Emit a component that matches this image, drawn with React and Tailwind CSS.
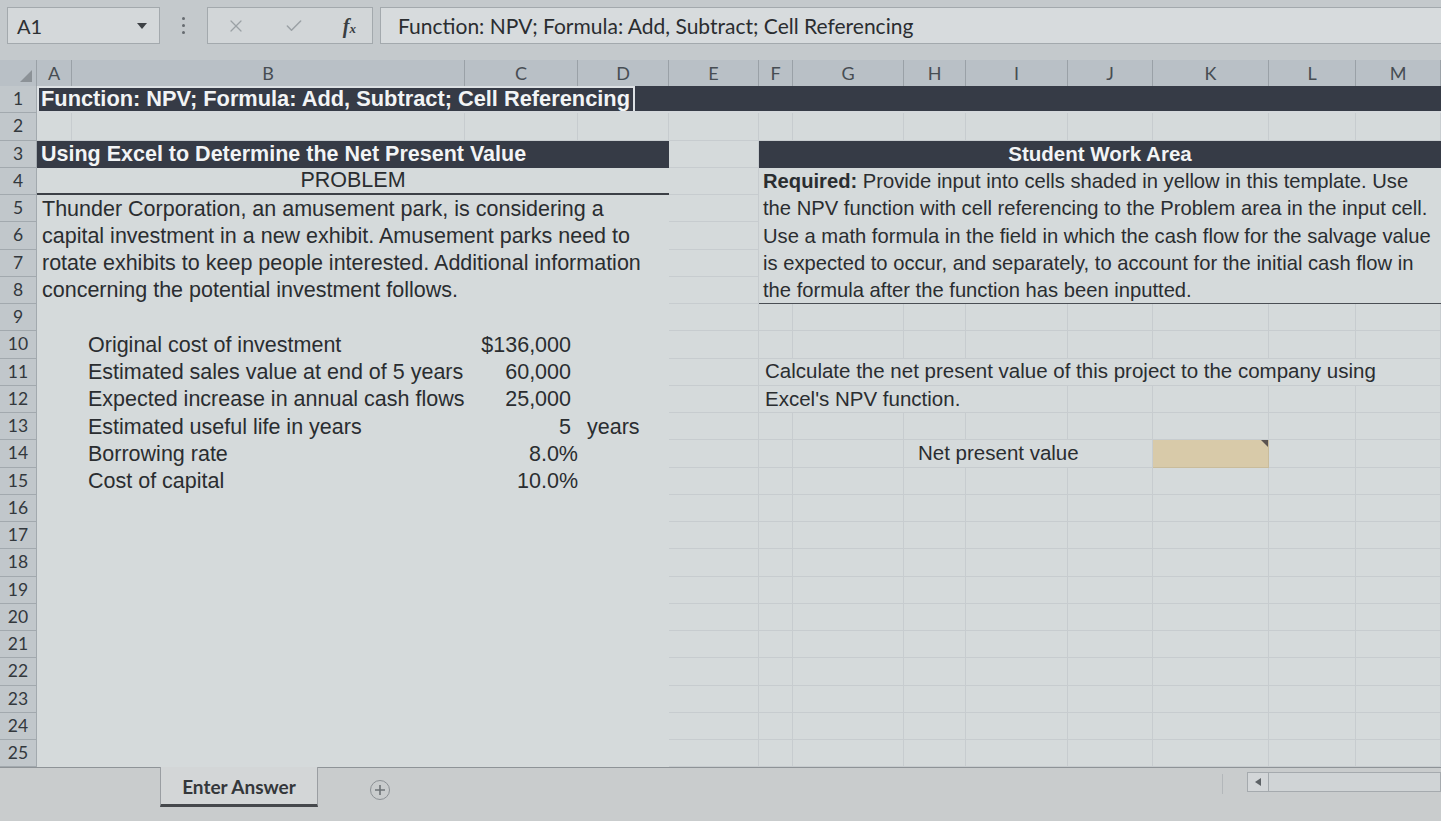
import React from "react";
import { X, Check } from "lucide-react";

const ui = "font-['Lato','Open_Sans',sans-serif]";
const cf = "font-['Liberation_Sans',Arial,sans-serif]";

const COLS = [
  { k: "A", w: "w-[35px]" },
  { k: "B", w: "w-[393px]" },
  { k: "C", w: "w-[113px]" },
  { k: "D", w: "w-[91px]" },
  { k: "E", w: "w-[90px]" },
  { k: "F", w: "w-[34px]" },
  { k: "G", w: "w-[111px]" },
  { k: "H", w: "w-[62px]" },
  { k: "I", w: "w-[102px]" },
  { k: "J", w: "w-[85px]" },
  { k: "K", w: "w-[116px]" },
  { k: "L", w: "w-[87px]" },
  { k: "M", w: "w-[85px]" },
];

// plain gridline cells from column index `from` to `to` (A = 0)
function Grid({ from, to }) {
  return COLS.slice(from, to + 1).map((c) => (
    <div key={c.k} className={`${c.w} shrink-0 border-r border-b border-[#c7cccf]`} />
  ));
}

function Row({ n, children }) {
  return (
    <div className="flex h-[27.25px]">
      <div className={`w-[37px] shrink-0 flex items-center justify-center bg-[#c1c7cb] border-r border-b border-[#a2a9ae] text-[17.5px] text-[#33383d] ${ui}`}>
        {n}
      </div>
      {children}
    </div>
  );
}

const left = `w-[632px] shrink-0 ${cf} text-[21.5px] text-[#2a2d30] whitespace-nowrap flex items-center`;
const right = `w-[682px] shrink-0 ${cf} text-[20.2px] text-[#2a2d30] whitespace-nowrap flex items-center pl-[4px]`;
const rtext = `${cf} text-[20.5px] text-[#2a2d30] whitespace-nowrap`;

const items = [
  ["Original cost of investment", "$136,000", ""],
  ["Estimated sales value at end of 5 years", "60,000", ""],
  ["Expected increase in annual cash flows", "25,000", ""],
  ["Estimated useful life in years", "5", "years"],
  ["Borrowing rate", "8.0%", ""],
  ["Cost of capital", "10.0%", ""],
];

export default function App() {
  return (
    <div className="w-[1441px] h-[821px] overflow-hidden bg-[#d5dadb] flex flex-col">
      {/* formula bar */}
      <div className="h-[60px] shrink-0 bg-[#c4c9cc] flex items-start pt-[7px] pl-[7px]">
        <div className="w-[153px] h-[37px] bg-[#d4d8da] border border-[#a3a9ad] flex items-center justify-between pl-[9px] pr-[12px]">
          <span className={`${ui} text-[20px] text-[#2d3033]`}>A1</span>
          <svg width="10" height="6" viewBox="0 0 10 6"><path d="M0 0h10L5 6z" fill="#3d4145" /></svg>
        </div>
        <div className="w-[47px] h-[37px] flex flex-col items-center justify-center gap-[4px]">
          <span className="w-[3px] h-[3px] bg-[#666b70] rounded-full" />
          <span className="w-[3px] h-[3px] bg-[#666b70] rounded-full" />
          <span className="w-[3px] h-[3px] bg-[#666b70] rounded-full" />
        </div>
        <div className="w-[166px] h-[37px] bg-[#d2d6d8] border border-[#a3a9ad] flex items-center pl-[18px] pr-[16px] justify-between">
          <X size={20} strokeWidth={1.5} className="text-[#9ba1a5]" />
          <Check size={20} strokeWidth={1.8} className="text-[#9ba1a5]" />
          <span className="font-['Liberation_Serif',serif] italic text-[20px] text-[#3a3e42] font-bold">
            f<span className="text-[13px]">x</span>
          </span>
        </div>
        <div className={`ml-[7px] flex-1 h-[37px] bg-[#d7dbdd] border border-r-0 border-[#a3a9ad] flex items-center pl-[17px] ${ui} text-[21px] text-[#2a2d30]`}>
          Function: NPV; Formula: Add, Subtract; Cell Referencing
        </div>
      </div>

      {/* column headers */}
      <div className="flex h-[26px] shrink-0 bg-[#b9c0c6]">
        <div className="w-[37px] shrink-0 border-r border-[#9aa1a7] flex items-end justify-end pr-[4px] pb-[4px]">
          <svg width="12" height="12" viewBox="0 0 12 12"><path d="M12 0v12H0z" fill="#8c9297" /></svg>
        </div>
        {COLS.map((c) => (
          <div key={c.k} className={`${c.w} shrink-0 border-r border-[#9aa1a7] flex items-center justify-center text-[18px] text-[#474d53] ${ui}`}>
            {c.k}
          </div>
        ))}
      </div>

      {/* rows */}
      <div className="flex flex-col">
        <Row n={1}>
          <div className="w-[1404px] shrink-0 bg-[#363b46] border-b-2 border-[#d5d9dc] flex">
            <div className={`w-[598px] border-2 border-b-0 border-[#dde1e4] flex items-center pl-[2px] ${cf} font-bold text-[21.8px] text-[#f2f4f5] whitespace-nowrap`}>
              Function: NPV; Formula: Add, Subtract; Cell Referencing
            </div>
          </div>
        </Row>
        <Row n={2}>
          <Grid from={0} to={12} />
        </Row>
        <Row n={3}>
          <div className={`${left} bg-[#363b46] text-[#f2f4f5] font-bold pl-[4px]`}>Using Excel to Determine the Net Present Value</div>
          <Grid from={4} to={4} />
          <div className={`w-[682px] shrink-0 bg-[#363b46] flex items-center justify-center ${cf} font-bold text-[20.5px] text-[#f2f4f5]`}>Student Work Area</div>
        </Row>
        <Row n={4}>
          <div className={`${left} justify-center border-b-2 border-[#3c4046]`}>PROBLEM</div>
          <Grid from={4} to={4} />
          <div className={right}>
            <span className="font-bold">Required:</span>&nbsp;Provide input into cells shaded in yellow in this template. Use
          </div>
        </Row>
        <Row n={5}>
          <div className={`${left} pl-[5px]`}>Thunder Corporation, an amusement park, is considering a</div>
          <Grid from={4} to={4} />
          <div className={right}>the NPV function with cell referencing to the Problem area in the input cell.</div>
        </Row>
        <Row n={6}>
          <div className={`${left} pl-[5px]`}>capital investment in a new exhibit. Amusement parks need to</div>
          <Grid from={4} to={4} />
          <div className={right}>Use a math formula in the field in which the cash flow for the salvage value</div>
        </Row>
        <Row n={7}>
          <div className={`${left} pl-[5px]`}>rotate exhibits to keep people interested. Additional information</div>
          <Grid from={4} to={4} />
          <div className={right}>is expected to occur, and separately, to account for the initial cash flow in</div>
        </Row>
        <Row n={8}>
          <div className={`${left} pl-[5px]`}>concerning the potential investment follows.</div>
          <Grid from={4} to={4} />
          <div className={`${right} border-b border-[#4a4e54]`}>the formula after the function has been inputted.</div>
        </Row>
        <Row n={9}>
          <div className="w-[632px] shrink-0" />
          <Grid from={4} to={12} />
        </Row>

        {items.map(([label, val, unit], i) => {
          const n = 10 + i;
          const pct = val.endsWith("%");
          return (
            <Row key={n} n={n}>
              <div className="w-[35px] shrink-0" />
              <div className={`w-[393px] shrink-0 pl-[16px] flex items-center ${cf} text-[21.5px] text-[#2a2d30] whitespace-nowrap`}>{label}</div>
              <div className={`w-[113px] shrink-0 flex items-center justify-end ${pct ? "pr-0" : "pr-[7px]"} ${cf} text-[21.5px] text-[#2a2d30]`}>{val}</div>
              <div className={`w-[91px] shrink-0 flex items-center pl-[9px] ${cf} text-[21.5px] text-[#2a2d30]`}>{unit}</div>
              <Grid from={4} to={4} />
              {n === 11 && (
                <>
                  <div className={`w-[597px] shrink-0 border-b border-[#c7cccf] flex items-center pl-[6px] ${rtext}`}>
                    Calculate the net present value of this project to the company using
                  </div>
                  <Grid from={12} to={12} />
                </>
              )}
              {n === 12 && (
                <>
                  <div className={`w-[309px] shrink-0 border-r border-b border-[#c7cccf] flex items-center pl-[6px] ${rtext}`}>
                    Excel's NPV function.
                  </div>
                  <Grid from={9} to={12} />
                </>
              )}
              {n === 14 && (
                <>
                  <Grid from={5} to={6} />
                  <div className={`w-[249px] shrink-0 border-r border-b border-[#c7cccf] flex items-center pl-[14px] ${rtext}`}>
                    Net present value
                  </div>
                  <div className="relative w-[116px] shrink-0 bg-[#d8caa9] border-r border-b border-[#c9bc9c]">
                    <svg className="absolute top-0 right-0" width="7" height="7" viewBox="0 0 7 7"><path d="M0 0h7v7z" fill="#5a5350" /></svg>
                  </div>
                  <Grid from={11} to={12} />
                </>
              )}
              {n !== 11 && n !== 12 && n !== 14 && <Grid from={5} to={12} />}
            </Row>
          );
        })}

        {Array.from({ length: 10 }, (_, i) => (
          <Row key={16 + i} n={16 + i}>
            <div className="w-[632px] shrink-0" />
            <Grid from={4} to={12} />
          </Row>
        ))}
      </div>

      {/* sheet tabs */}
      <div className="flex-1 bg-[#c9cccd] flex items-start">
        <div className="w-[160px] h-full border-t border-[#8e9397]" />
        <div className={`w-[158px] h-[40px] bg-[#d3d6d7] border-x border-[#9a9ea2] border-b-[3px] border-b-[#45484c] flex items-center justify-center pt-[3px] ${ui} font-bold text-[19px] text-[#34373a]`}>
          Enter Answer
        </div>
        <div className="flex-1 h-full border-t border-[#8e9397] flex items-start">
          <div className="ml-[52px] mt-[12px] w-[20px] h-[20px] rounded-full border border-[#8c9195] flex items-center justify-center text-[#6e7377]">
            <svg width="10" height="10" viewBox="0 0 10 10"><path d="M5 0v10M0 5h10" stroke="currentColor" strokeWidth="1.6" /></svg>
          </div>
          <div className="ml-[832px] mt-[6px] h-[20px] w-[1px] bg-[#b3b7ba]" />
          <div className="ml-[24px] mt-[4px] w-[22px] h-[20px] border border-[#a5aaae] bg-[#d3d6d8] flex items-center justify-center">
            <svg width="6" height="8" viewBox="0 0 6 8"><path d="M6 0v8L0 4z" fill="#5d6266" /></svg>
          </div>
          <div className="mt-[4px] flex-1 h-[20px] border border-l-0 border-[#a5aaae] bg-[#d0d4d6]" />
        </div>
      </div>
    </div>
  );
}
